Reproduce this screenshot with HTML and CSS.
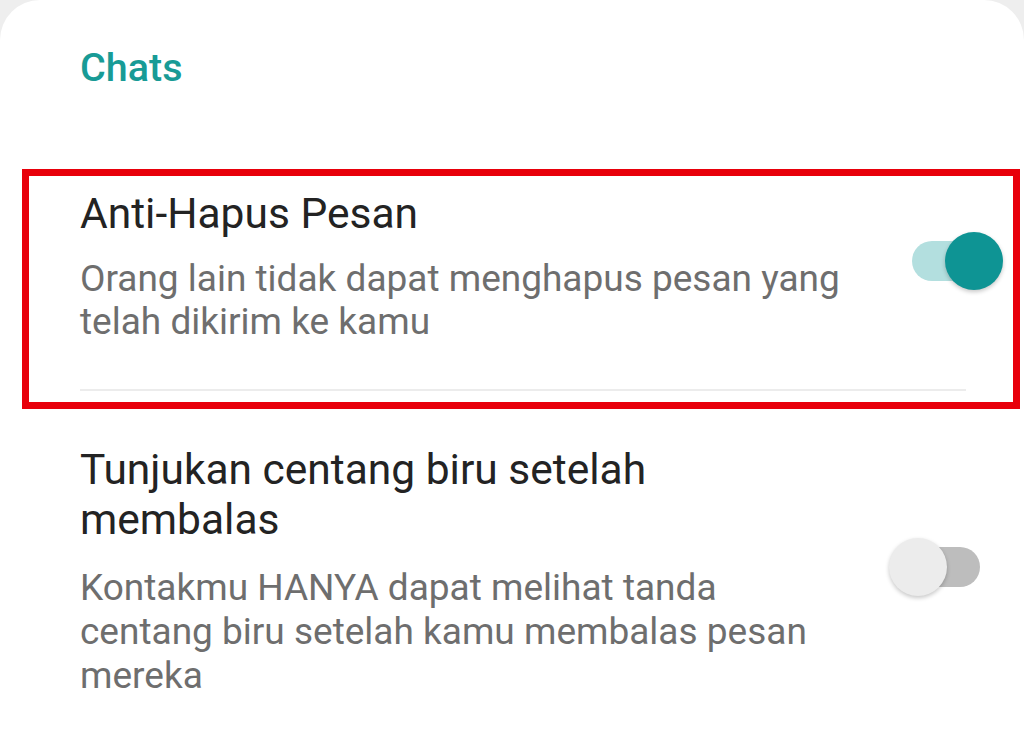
FILE: index.html
```html
<!DOCTYPE html>
<html lang="id">

<head>
    <meta charset="UTF-8">
    <meta name="viewport" content="width=device-width, initial-scale=1.0">
    <title>Pengaturan - Chats</title>
    <link rel="stylesheet" href="styles.css">
</head>

<body>
    <div class="card">
        <h2 class="section-title">Chats</h2>

        <!-- highlighted option -->
        <div class="highlight">
            <div class="setting">
                <div class="setting-text">
                    <div class="setting-title">Anti-Hapus Pesan</div>
                    <div class="setting-desc">Orang lain tidak dapat menghapus pesan yang telah dikirim ke kamu</div>
                </div>
                <div class="toggle on">
                    <span class="track"></span>
                    <span class="thumb"></span>
                </div>
            </div>
            <div class="divider"></div>
        </div>

        <div class="setting second">
            <div class="setting-text">
                <div class="setting-title">Tunjukan centang biru setelah membalas</div>
                <div class="setting-desc">Kontakmu HANYA dapat melihat tanda centang biru setelah kamu membalas pesan mereka</div>
            </div>
            <div class="toggle">
                <span class="track"></span>
                <span class="thumb"></span>
            </div>
        </div>
    </div>
</body>

</html>
```

FILE: styles.css
```css
/* Reset and base styles */
* {
    margin: 0;
    padding: 0;
    box-sizing: border-box;
}

body {
    background-color: #eeeeee;
    font-family: Roboto, 'Noto Sans', sans-serif;
    color: #222;
}

/* Card */
.card {
    background-color: #fff;
    border-radius: 40px 40px 0 0;
    min-height: 735px;
    overflow: hidden;
}

.section-title {
    padding: 45px 80px 0;
    font-size: 39.5px;
    font-weight: 500;
    line-height: 46px;
    color: #189b96;
}

/* Red annotation box */
.highlight {
    margin: 78px 4px 0 22px;
    border: 7px solid #e8000b;
}

/* Setting rows */
.setting {
    display: flex;
    align-items: center;
    padding: 13px 10px 0 51px;
}

.setting.second {
    padding: 36px 21px 0 80px;
}

.setting-text {
    width: 762px;
}

.setting-title {
    font-size: 42.5px;
    line-height: 50px;
    color: #232323;
}

.setting-desc {
    margin-top: 18px;
    font-size: 37px;
    line-height: 43px;
    color: #6e6e6e;
}

.setting.second .setting-desc {
    margin-top: 21px;
    line-height: 44px;
}

.divider {
    height: 2px;
    background-color: #ececec;
    margin: 46px 47px 11px 51px;
}

/* Switch */
.toggle {
    position: relative;
    width: 114px;
    height: 58px;
    margin-left: auto;
    margin-bottom: 10px;
    flex-shrink: 0;
}

.toggle .track {
    position: absolute;
    left: 23px;
    top: 9px;
    width: 68px;
    height: 40px;
    border-radius: 20px;
    background-color: #bdbdbd;
}

.toggle .thumb {
    position: absolute;
    left: 0;
    top: 0;
    width: 58px;
    height: 58px;
    border-radius: 50%;
    background-color: #ececec;
    box-shadow: 0 2px 4px rgba(0, 0, 0, 0.22);
}

.toggle.on .track {
    background-color: #b3dfdf;
}

.toggle.on .thumb {
    left: 56px;
    background-color: #0e9494;
}
```
